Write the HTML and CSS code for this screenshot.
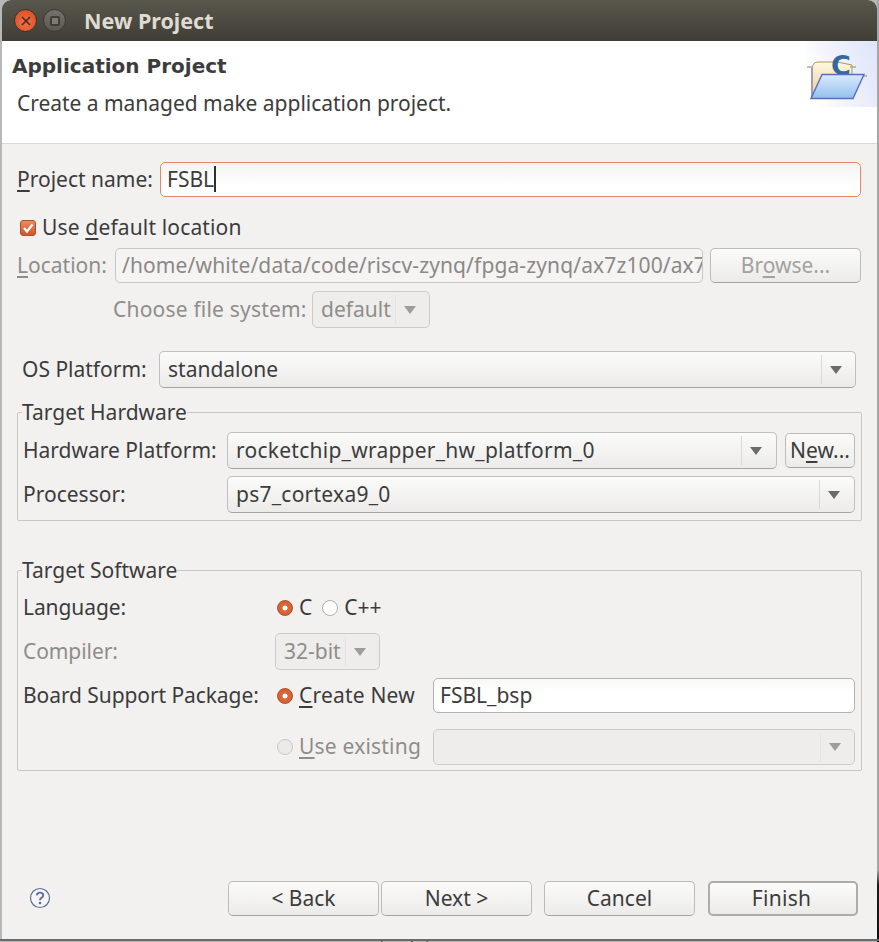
FILE: index.html
```html
<!DOCTYPE html>
<html lang="en">
<head>
    <meta charset="UTF-8">
    <title>New Project</title>
    <link rel="stylesheet" href="styles.css">
</head>
<body>
    <div class="window">
        <div class="titlebar">
            <span class="win-btn win-close">
                <svg width="12" height="12" viewBox="0 0 12 12"><path d="M2 2 L10 10 M10 2 L2 10" stroke="#4a2a1c" stroke-width="1.6" fill="none"/></svg>
            </span>
            <span class="win-btn win-max"><span class="win-max-box"></span></span>
            <span class="title">New Project</span>
        </div>

        <div class="banner">
            <div class="banner-text">
                <h2>Application Project</h2>
                <p>Create a managed make application project.</p>
            </div>
            <div class="banner-art">
                <svg width="62" height="50" viewBox="0 0 62 50">
                    <defs>
                        <linearGradient id="back" x1="0" y1="0" x2="0" y2="1">
                            <stop offset="0" stop-color="#fdf8e4"/>
                            <stop offset="1" stop-color="#f0cd84"/>
                        </linearGradient>
                        <linearGradient id="front" x1="0" y1="0" x2="0" y2="1">
                            <stop offset="0" stop-color="#d9ebfc"/>
                            <stop offset="1" stop-color="#94c0ee"/>
                        </linearGradient>
                    </defs>
                    <path d="M7 48 V18 Q8 12 13 12 H32 L47 15 V26 H18 Z" fill="url(#back)" stroke="#b5975a"/>
                    <path d="M7 48 V18" stroke="#8f93c4" stroke-width="1.6"/>
                    <path d="M2 17 H8 M45 17 H51 M58 26 H62" stroke="#a9a9a9" stroke-width="1.5"/>
                    <text class="art-c" x="26" y="25">C</text>
                    <path d="M17 24.5 H59 L48 48.5 H6 Z" fill="url(#front)" stroke="#5a6cc0" stroke-width="1.4"/>
                </svg>
            </div>
        </div>

        <div class="content">
            <div class="row row-name">
                <label class="name-label"><u>P</u>roject name:</label>
                <div class="input input-focus">FSBL<span class="caret"></span></div>
            </div>

            <div class="check-row">
                <span class="checkbox">
                    <svg width="12" height="12" viewBox="0 0 12 12"><path d="M2 6 L5 9.5 L10.5 2.5" stroke="#fff" stroke-width="2.2" fill="none"/></svg>
                </span>
                <span class="check-text">Use <u>d</u>efault location</span>
            </div>

            <div class="row row-location is-disabled">
                <label class="location-label"><u>L</u>ocation:</label>
                <div class="input input-disabled input-location"><span class="clip">/home/white/data/code/riscv-zynq/fpga-zynq/ax7z100/ax7z100_project</span></div>
                <div class="button btn-browse"><span>Br<u>o</u>wse...</span></div>
            </div>

            <div class="row row-fs is-disabled">
                <label class="fs-label">Choose file system:</label>
                <div class="combo combo-disabled combo-fs"><span class="combo-text">default</span><span class="combo-sep"></span><span class="arrow"></span></div>
            </div>

            <div class="row row-os">
                <label class="os-label">OS Platform:</label>
                <div class="combo combo-os"><span class="combo-text">standalone</span><span class="combo-sep"></span><span class="arrow"></span></div>
            </div>

            <fieldset class="group group-hw">
                <legend>Target Hardware</legend>
                <div class="row hw-row">
                    <label class="hw-label">Hardware Platform:</label>
                    <div class="combo combo-hw"><span class="combo-text">rocketchip_wrapper_hw_platform_0</span><span class="combo-sep"></span><span class="arrow"></span></div>
                    <div class="button btn-new"><span>N<u>e</u>w...</span></div>
                </div>
                <div class="row proc-row">
                    <label class="hw-label">Processor:</label>
                    <div class="combo combo-proc"><span class="combo-text">ps7_cortexa9_0</span><span class="combo-sep"></span><span class="arrow"></span></div>
                </div>
            </fieldset>

            <fieldset class="group group-sw">
                <legend>Target Software</legend>
                <div class="row lang-row">
                    <label class="sw-label">Language:</label>
                    <span class="radio radio-on"></span>
                    <span class="radio-text">C</span>
                    <span class="radio radio-cpp"></span>
                    <span class="radio-text">C++</span>
                </div>
                <div class="row compiler-row is-disabled">
                    <label class="sw-label">Compiler:</label>
                    <div class="combo combo-disabled combo-bit"><span class="combo-text">32-bit</span><span class="combo-sep"></span><span class="arrow"></span></div>
                </div>
                <div class="row bsp-row">
                    <label class="sw-label">Board Support Package:</label>
                    <span class="radio radio-on"></span>
                    <span class="radio-text radio-wide"><u>C</u>reate New</span>
                    <div class="input input-bsp">FSBL_bsp</div>
                </div>
                <div class="row existing-row is-disabled">
                    <span class="sw-label"></span>
                    <span class="radio radio-off"></span>
                    <span class="radio-text radio-wide"><u>U</u>se existing</span>
                    <div class="combo combo-disabled combo-existing"><span class="combo-text"></span><span class="combo-sep"></span><span class="arrow"></span></div>
                </div>
            </fieldset>
        </div>

        <div class="footer">
            <svg class="help" width="22" height="22" viewBox="0 0 22 22">
                <circle cx="11" cy="11" r="9.5" fill="#f6f6f8" stroke="#5d6f96" stroke-width="1.2"/>
                <path d="M7.8 8.4 Q8 5.6 11 5.6 Q14.2 5.6 14.2 8.2 Q14.2 9.8 12.4 10.8 Q11 11.6 11 13.2" fill="none" stroke="#5d6f96" stroke-width="1.9"/>
                <circle cx="11" cy="16" r="1.3" fill="#5d6f96"/>
            </svg>
            <div class="button btn-nav btn-back"><span>&lt; Back</span></div>
            <div class="button btn-nav btn-next"><span>Next &gt;</span></div>
            <div class="button btn-nav btn-cancel"><span>Cancel</span></div>
            <div class="button btn-nav btn-finish"><span>Finish</span></div>
        </div>
    </div>
    <div class="behind"><span class="behind-text">Design Timing Summary</span></div>
</body>
</html>
```

FILE: styles.css
```css
* {
    box-sizing: border-box;
}

html, body {
    height: 100%;
}

body {
    margin: 0;
    height: 942px;
    overflow: hidden;
    background:
        linear-gradient(#a6a6a6 0, #a6a6a6 870px, #1c1c1c 885px, #111 935px) right top / 2px 942px no-repeat,
        #b8b8b8;
    font-family: "Noto Sans", "Open Sans", sans-serif;
    font-size: 21px;
    color: #3c3c3c;
}

.window {
    margin-left: 2px;
    width: 875px;
    height: 940px;
    background: #f2f1f0;
    border-radius: 9px 9px 0 0;
    overflow: hidden;
    display: flex;
    flex-direction: column;
}

.behind {
    height: 2px;
    padding-left: 357px;
    background: #6a6a6a;
}

.behind-text {
    display: block;
    font-size: 13px;
    line-height: 14px;
    margin-top: -1px;
    color: #222;
}

/* title bar */
.titlebar {
    height: 41px;
    flex: none;
    background: linear-gradient(#5a574d, #3f3d35);
    display: flex;
    align-items: center;
    padding-left: 12px;
}

.win-btn {
    width: 23px;
    height: 23px;
    border-radius: 50%;
    display: flex;
    align-items: center;
    justify-content: center;
}

.win-close {
    background: radial-gradient(circle at 50% 60%, #f0714a, #d9481c);
    border: 1px solid #3a3428;
}

.win-max {
    margin-left: 6px;
    background: linear-gradient(#74726a, #5a5850);
    border: 1px solid #3a3830;
}

.win-max-box {
    width: 10px;
    height: 10px;
    border: 2px solid #3f3d36;
    background: #7d7b72;
    border-radius: 2px;
}

.title {
    margin-left: 18px;
    font-size: 21.5px;
    font-weight: 700;
    color: #dfdbd2;
}

/* white header */
.banner {
    height: 103px;
    flex: none;
    background: #fff;
    border-bottom: 1px solid #d9d8d6;
    display: flex;
    justify-content: space-between;
    align-items: flex-start;
}

.banner-text {
    padding-left: 10px;
}

.banner-text h2 {
    margin: 13px 0 0;
    font-family: "DejaVu Sans", sans-serif;
    font-size: 20px;
    line-height: 24px;
    font-weight: 700;
    color: #3c3c3c;
}

.banner-text p {
    margin: 11px 0 0 5px;
    font-size: 21px;
    line-height: 28px;
    letter-spacing: -0.03px;
}

.banner-art {
    width: 72px;
    height: 66px;
    padding-top: 9px;
    background: linear-gradient(250deg, #dfe4f7 0, #eef0fb 45%, #fff 85%);
}

.art-c {
    font-family: "DejaVu Sans", sans-serif;
    font-size: 27px;
    font-weight: 700;
    fill: #33699c;
}

/* form area */
.content {
    flex: 1;
    padding-left: 15px;
}

.row {
    display: flex;
    align-items: center;
}

.row label, .radio-text, .combo-text, .button span {
    padding-bottom: 2px;
}

.is-disabled {
    color: #8f8d88;
}

u {
    text-underline-offset: 3px;
}

.input, .combo, .button {
    display: flex;
    align-items: center;
    border-radius: 5px;
    white-space: nowrap;
}

.input {
    height: 35px;
    padding: 0 0 2px 6px;
    background: linear-gradient(#f8f8f7, #ffffff 40%);
    border: 1px solid #b4b2ae;
}

.input-focus {
    width: 701px;
    border-color: #e8876a;
    background: linear-gradient(#f4f3f2, #ffffff 70%);
}

.caret {
    width: 1.5px;
    height: 26px;
    background: #2e2e2e;
}

.input-disabled {
    background: #f5f4f3;
    border-color: #c9c7c4;
}

.clip {
    overflow: hidden;
    width: 100%;
    letter-spacing: 0.12px;
}

.combo {
    height: 37px;
    padding-left: 8px;
    background: linear-gradient(#fbfbfa, #ecebe9);
    border: 1px solid #c2c0bc;
    border-bottom-color: #a5a3a0;
}

.combo-text {
    flex: 1;
    white-space: nowrap;
}

.combo-sep {
    width: 1px;
    height: 29px;
    background: #dad9d6;
    margin-right: 8px;
}

.arrow {
    width: 0;
    height: 0;
    margin-right: 13px;
    border-left: 6px solid transparent;
    border-right: 6px solid transparent;
    border-top: 8px solid #6b6b6b;
}

.combo-disabled {
    background: #eeedec;
    border-color: #cdcbc8;
}

.combo-disabled .combo-sep {
    background: #e4e3e1;
}

.combo-disabled .arrow {
    border-top-color: #a09d98;
}

.button {
    justify-content: center;
    height: 35px;
    background: linear-gradient(#fbfbfa, #ecebe9);
    border: 1px solid #bdbbb7;
    border-bottom-color: #a5a3a0;
}

/* top rows */
.row-name {
    margin-top: 18px;
}

.name-label {
    width: 143px;
}

.check-row {
    display: flex;
    align-items: center;
    margin: 14px 0 0 3px;
    height: 34px;
}

.check-text {
    padding-bottom: 2px;
    letter-spacing: 0.15px;
}

.checkbox {
    width: 16px;
    height: 16px;
    margin-right: 6px;
    border-radius: 3px;
    background: linear-gradient(#ef8a5e, #d2562a);
    border: 1px solid #a8542f;
    display: flex;
    align-items: center;
    justify-content: center;
}

.row-location {
    margin-top: 3px;
}

.location-label {
    width: 98px;
}

.input-location {
    width: 588px;
    color: #8b8985;
}

.btn-browse {
    width: 151px;
    margin-left: 7px;
    color: #a3a19c;
}

.row-fs {
    margin-top: 8px;
}

.fs-label {
    width: 295px;
    padding-left: 96px;
    white-space: nowrap;
    letter-spacing: 0.2px;
}

.combo-fs {
    width: 118px;
    height: 37px;
}

.row-os {
    margin-top: 23px;
}

.os-label {
    width: 142px;
    padding-left: 5px;
}

.combo-os {
    width: 697px;
}

/* groups */
.group {
    margin: 0;
    padding: 0 5px;
    width: 845px;
    border: 1px solid #c9c7c4;
    border-radius: 2px;
    min-width: 0;
}

.group legend {
    padding: 0;
    margin-left: -1px;
    line-height: 28px;
}

.group-hw {
    margin-top: 10px;
    height: 123px;
}

.hw-row {
    margin-top: 6px;
}

.hw-label {
    width: 204px;
    white-space: nowrap;
}

.combo-hw {
    width: 550px;
}

.combo-hw .combo-text, .combo-proc .combo-text {
    letter-spacing: 0.25px;
}

.combo-hw .arrow, .combo-proc .arrow {
    margin-right: 14px;
}

.btn-new {
    width: 70px;
    margin-left: 8px;
}

.proc-row {
    margin-top: 7px;
}

.combo-proc {
    width: 628px;
}

.group-sw {
    margin-top: 35px;
    height: 215px;
}

.sw-label {
    width: 254px;
    white-space: nowrap;
    letter-spacing: -0.08px;
}

.radio {
    width: 16px;
    height: 16px;
    border-radius: 50%;
    flex: none;
    background: #fff;
    border: 1px solid #b0aeaa;
}

.radio-on {
    background: radial-gradient(circle, #fff 0, #fff 22%, #e0693c 28%, #cf5526 100%);
    border-color: #a8542f;
}

.radio-off {
    background: #ebeae9;
    border-color: #c9c7c4;
}

.radio-text {
    margin-left: 6px;
}

.radio-cpp {
    margin-left: 10px;
}

.radio-wide {
    width: 134px;
    letter-spacing: 0.2px;
}

.lang-row {
    margin-top: 10px;
    height: 28px;
}

.compiler-row {
    margin-top: 11px;
}

.combo-bit {
    width: 105px;
    margin-left: -2px;
}

.bsp-row {
    margin-top: 8px;
}

.input-bsp {
    width: 422px;
}

.existing-row {
    margin-top: 16px;
}

.combo-existing {
    width: 422px;
    height: 36px;
}

/* bottom buttons */
.footer {
    flex: none;
    height: 59px;
    position: relative;
    display: flex;
    align-items: flex-start;
    padding-left: 226px;
}

.help {
    position: absolute;
    left: 27px;
    top: 6px;
}

.btn-nav {
    width: 151px;
}

.btn-next {
    margin-left: 2px;
}

.btn-cancel {
    margin-left: 12px;
}

.btn-finish {
    margin-left: 13px;
    width: 150px;
    border: 2px solid #aeaca8;
}

.btn-finish span {
    letter-spacing: 0.3px;
    margin-right: 3px;
}
```
